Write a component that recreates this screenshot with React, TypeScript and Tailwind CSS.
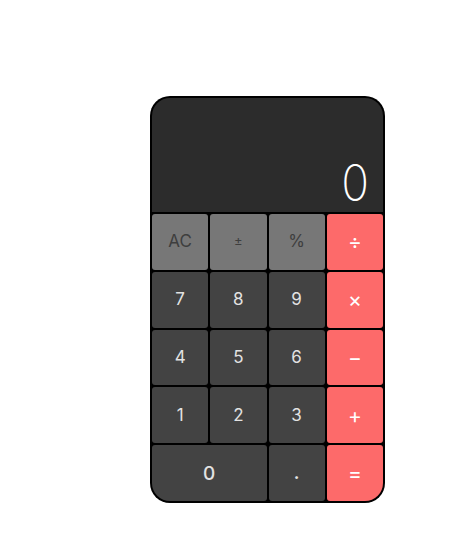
import React from 'react'

type Key = { label: string; kind: 'fn' | 'num' | 'op'; wide?: boolean }

const KEYS: Key[] = [
  { label: 'AC', kind: 'fn' },
  { label: '±', kind: 'fn' },
  { label: '%', kind: 'fn' },
  { label: '÷', kind: 'op' },
  { label: '7', kind: 'num' },
  { label: '8', kind: 'num' },
  { label: '9', kind: 'num' },
  { label: '×', kind: 'op' },
  { label: '4', kind: 'num' },
  { label: '5', kind: 'num' },
  { label: '6', kind: 'num' },
  { label: '−', kind: 'op' },
  { label: '1', kind: 'num' },
  { label: '2', kind: 'num' },
  { label: '3', kind: 'num' },
  { label: '+', kind: 'op' },
  { label: '0', kind: 'num', wide: true },
  { label: '.', kind: 'num' },
  { label: '=', kind: 'op' },
]

const KIND_STYLE: Record<Key['kind'], string> = {
  fn: 'bg-[#777777] text-[#3e3e3e] text-[17px]',
  num: 'bg-[#434343] text-[#e2e2e2] text-[17px]',
  op: 'bg-[#fd6a6a] text-white text-[21px]',
}

export default function App() {
  return (
    <div className="w-[467px] h-[534px] bg-white font-['Inter',sans-serif]">
      <div className="pt-[96px] pl-[150px]">
        {/* Calculator body */}
        <div className="w-[235px] h-[407px] bg-black rounded-[20px] p-[2px] flex flex-col overflow-hidden">
          {/* Display */}
          <div className="h-[114px] shrink-0 bg-[#2c2c2c] rounded-t-[18px] flex items-end justify-end pr-[13px] pb-[4px]">
            <span className="text-[50px] leading-none font-extralight text-white scale-x-[0.92]">0</span>
          </div>

          {/* Keypad */}
          <div className="flex-1 mt-[2px] grid grid-cols-4 grid-rows-5 gap-[2px] rounded-b-[18px] overflow-hidden">
            {KEYS.map((k) => (
              <button
                key={k.label}
                className={`${KIND_STYLE[k.kind]} ${
                  k.wide ? 'col-span-2 !text-[19px] font-medium' : ''
                } rounded-[3px] flex items-center justify-center leading-none`}
              >
                {k.label === '±' ? (
                  <span className="text-[13px]">±</span>
                ) : k.label === '.' ? (
                  <span className="font-bold">.</span>
                ) : (
                  k.label
                )}
              </button>
            ))}
          </div>
        </div>
      </div>
    </div>
  )
}
